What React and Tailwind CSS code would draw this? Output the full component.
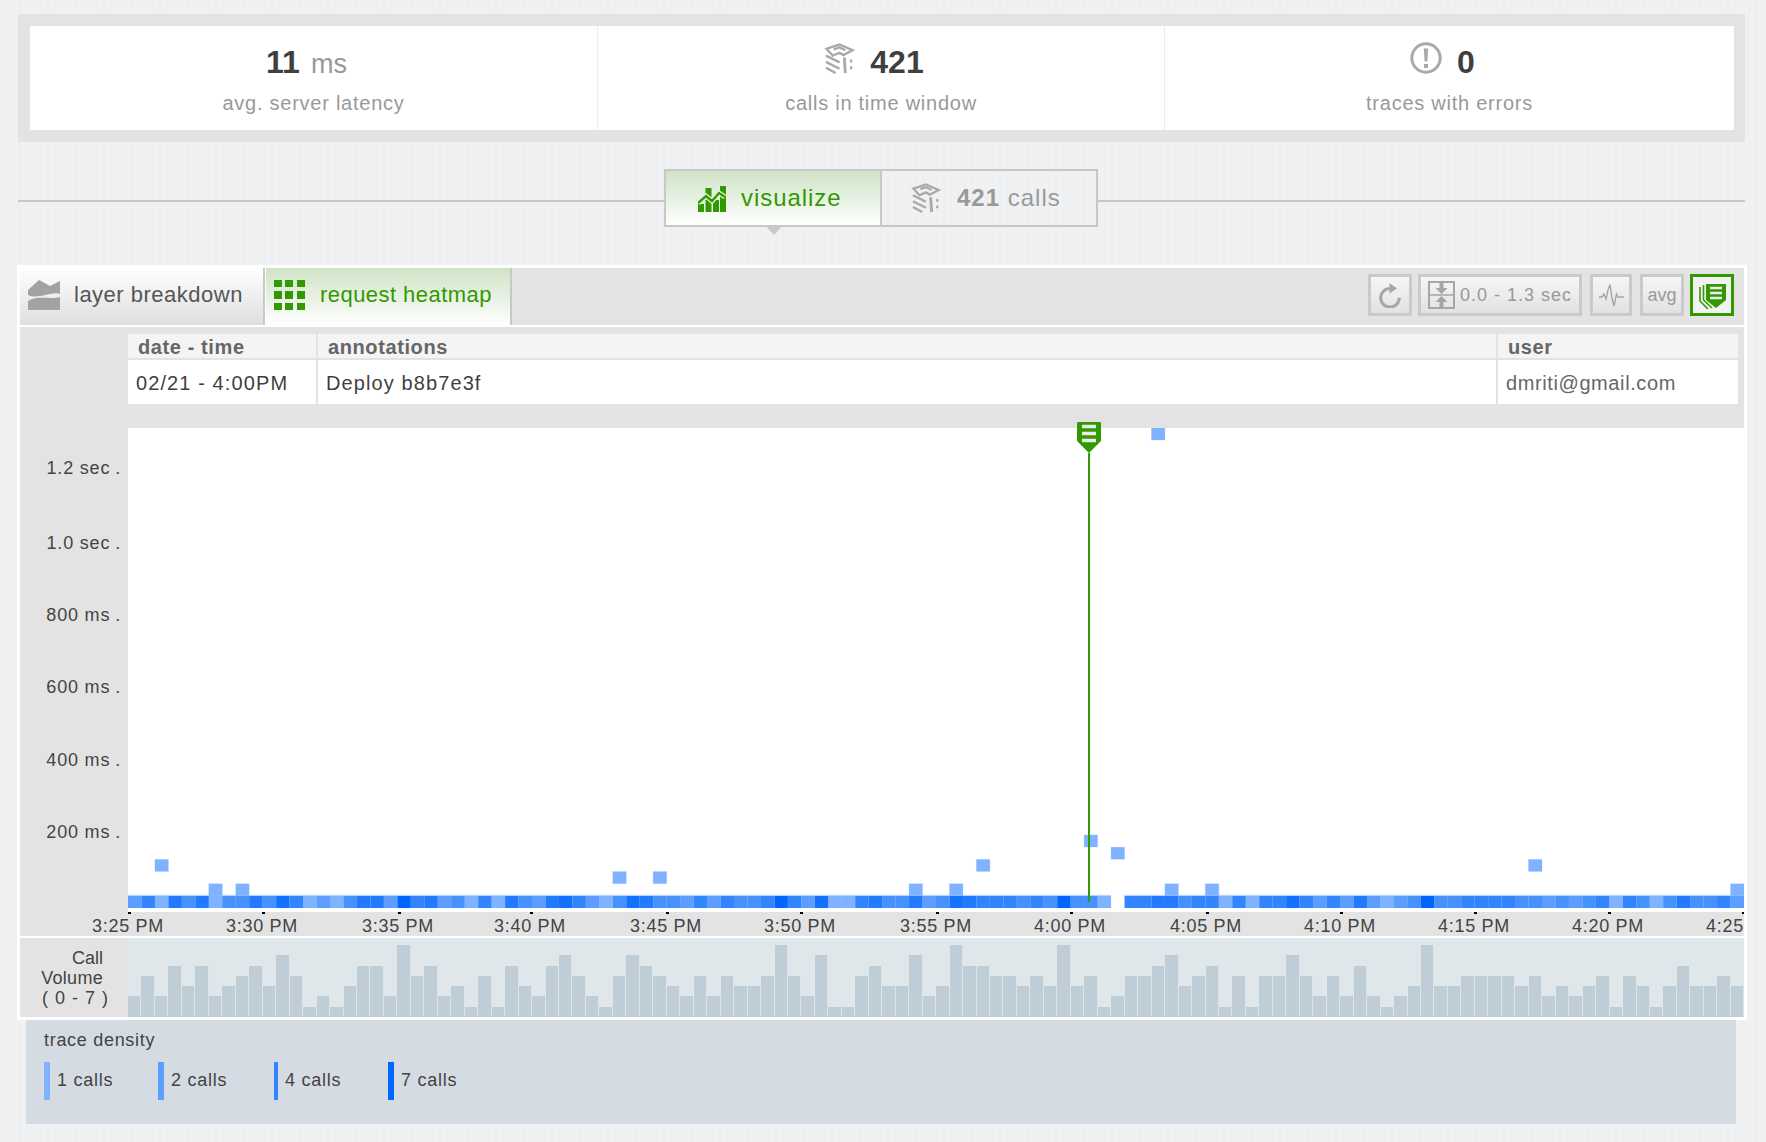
import React from 'react';

// calls per bucket, read off the volume strip
const VOLUME = [
  2, 4, 2, 5, 3, 5, 2, 3, 4, 5, 3, 6, 4, 1, 2, 1, 3, 5, 5, 2, 7, 4, 5, 2, 3, 1, 4, 1, 5, 3, 2, 5, 6, 4, 2,
  1, 4, 6, 5, 4, 3, 2, 4, 2, 4, 3, 3, 4, 7, 4, 2, 6, 1, 1, 4, 5, 3, 3, 6, 2, 3, 7, 5, 5, 4, 4, 3, 4, 3, 7,
  3, 4, 1, 2, 4, 4, 5, 6, 3, 4, 5, 1, 4, 1, 4, 4, 6, 4, 2, 4, 2, 5, 2, 1, 2, 3, 7, 3, 3, 4, 4, 4, 4, 3, 4,
  2, 3, 2, 3, 4, 1, 4, 3, 1, 3, 5, 3, 3, 4, 3,
];

// stray cells above the base row: [bucket, row]
const STRAYS = [
  [2, 3], [6, 1], [8, 1], [36, 2], [39, 2], [58, 1], [61, 1], [63, 3], [71, 5], [73, 4], [77, 1], [80, 1], [104, 3], [119, 1],
];

const DENSITY = { 1: 0.5, 2: 0.64, 3: 0.72, 4: 0.8, 5: 0.87, 6: 0.93, 7: 1 };
const CELL = 1616 / 120;

const Y_LABELS = [
  ['1.2 sec', 40],
  ['1.0 sec', 115],
  ['800 ms', 187],
  ['600 ms', 259],
  ['400 ms', 332],
  ['200 ms', 404],
];

const X_LABELS = [
  ['3:25 PM', 1], ['3:30 PM', 135], ['3:35 PM', 271], ['3:40 PM', 403], ['3:45 PM', 539], ['3:50 PM', 673],
  ['3:55 PM', 809], ['4:00 PM', 943], ['4:05 PM', 1079], ['4:10 PM', 1213], ['4:15 PM', 1347], ['4:20 PM', 1481], ['4:25 PM', 1615],
];

const LEGEND = [
  ['1 calls', 'bg-[#80b3ff]', 'w-[6px]', 'w-[114px]'],
  ['2 calls', 'bg-[#5c9eff]', 'w-[6px]', 'w-[116px]'],
  ['4 calls', 'bg-[#3385ff]', 'w-[4px]', 'w-[114px]'],
  ['7 calls', 'bg-[#0066ff]', 'w-[6px]', 'w-[114px]'],
];

const StackIcon = ({ className }) => (
  <svg viewBox="0 0 30 32" className={className} fill="none" stroke="#a9a9a9" strokeWidth="2.4">
    <path d="M1.5 6 L15 1.5 L28.5 7.5 L19 12.5 L15 10 L8 13 Z M9 6.5 L15 4.5 L21 7.5" />
    <path d="M1 13 L15 20 M1 19.5 L15 26.5 M1 25.5 L11 31" />
    <path d="M20 15 L21 31" strokeWidth="3" />
    <path d="M27 17 v3 M27 24 v3" />
  </svg>
);

const AlertIcon = () => (
  <svg viewBox="0 0 32 32" className="w-[32px] h-[32px]" fill="none">
    <circle cx="16" cy="16" r="14.2" stroke="#a9a9a9" strokeWidth="3" />
    <path d="M13.8 6.5 h4.4 l-0.8 13 h-2.8 Z M14 22 h4 v4 h-4 Z" fill="#a9a9a9" />
  </svg>
);

const VisualizeIcon = () => (
  <svg viewBox="0 0 28 27" className="w-[28px] h-[27px]" fill="#339900">
    <path d="M0 19 h6 v8 H0 Z M7.5 3 h6 v24 h-6 Z M15 15 h6 v12 h-6 Z M22 1 h6 v26 h-6 Z" />
    <path d="M0 18 L8 11 L14 16 L21 8 L27 12" fill="none" stroke="#e4efdf" strokeWidth="5" />
    <path d="M0 18 L8 11 L14 16 L21 8 L27 12" fill="none" stroke="#339900" strokeWidth="2.4" />
  </svg>
);

const LayersIcon = () => (
  <svg viewBox="0 0 32 30" className="w-[32px] h-[30px]" fill="#a2a2a2">
    <path d="M0 10 L11 0 L22 6 L32 1 V14 C24 11 10 20 0 15 Z" />
    <path d="M0 21 C10 15 22 20 32 17 V30 H0 Z" />
  </svg>
);

const GridIcon = () => (
  <svg viewBox="0 0 31 30" className="w-[31px] h-[30px]" fill="#339900">
    <path d="M0 0 h8 v7 H0 Z M11 0 h8 v7 h-8 Z M23 0 h8 v7 h-8 Z M0 11 h8 v8 H0 Z M11 11 h8 v8 h-8 Z M23 11 h8 v8 h-8 Z M0 23 h8 v7 H0 Z M11 23 h8 v7 h-8 Z M23 23 h8 v7 h-8 Z" />
  </svg>
);

const RefreshIcon = () => (
  <svg viewBox="0 0 22 25" className="w-[22px] h-[25px]" fill="none">
    <path d="M11 5.5 A9.3 9.3 0 1 0 20.3 14.8" stroke="#a6a6a6" strokeWidth="3" />
    <path d="M10.5 0 L18 5.5 L10.5 10.5 Z" fill="#a6a6a6" />
  </svg>
);

const RangeIcon = () => (
  <svg viewBox="0 0 27 28" className="w-[27px] h-[28px]" fill="#a6a6a6">
    <path d="M1 1 h25 v26 h-25 Z" fill="none" stroke="#a6a6a6" strokeWidth="2" />
    <path d="M1 14 h25" stroke="#a6a6a6" strokeWidth="1.5" />
    <path d="M11.5 2 h4 v5 h4 L13.5 13 L7.5 7 h4 Z M7.5 21 L13.5 15 L19.5 21 h-4 v5 h-4 v-5 Z" />
  </svg>
);

const WaveIcon = () => (
  <svg viewBox="0 0 25 23" className="w-[25px] h-[23px]" fill="none" stroke="#a6a6a6" strokeWidth="1.4">
    <path d="M0 13 H3 L5 10 L7 15 L9 6 L11 0.5 L13 14 L15 22 L17.5 10 L19 13 H25" />
  </svg>
);

const NotesIcon = () => (
  <svg viewBox="0 0 27 27" className="w-[27px] h-[27px]" fill="none">
    <path d="M7 2 h20 v16 l-10 8 l-10 -8 Z" fill="#339900" />
    <path d="M11 6 h12 M11 11 h12 M11 16 h12" stroke="#ececec" strokeWidth="2.6" />
    <path d="M4.5 3 V18 L13 26 M1 5 V19 L9 27" stroke="#339900" strokeWidth="1.6" />
  </svg>
);

const Stat = ({ icon, value, unit, label, className }) => (
  <div className={`flex flex-col items-center pt-[16px] border-r border-[#ececec] last:border-r-0 ${className}`}>
    <div className="h-[40px] flex items-center gap-[15px] pr-[14px]">
      {icon && <div className="-mt-[8px]">{icon}</div>}
      <span className="text-[32px] font-bold text-[#3f3f3f] leading-none">
        {value}
        {unit && <span className="ml-[11px] text-[27px] font-normal text-[#999]">{unit}</span>}
      </span>
    </div>
    <div className="mt-[9px] text-[20px] leading-[24px] tracking-[0.75px] text-[#999]">{label}</div>
  </div>
);

const ToolButton = ({ className, children }) => (
  <div className={`h-[42px] flex items-center justify-center border-[3px] border-[#cacaca] bg-gradient-to-b from-[#f6f6f6] to-[#e2e2e2] ${className}`}>
    {children}
  </div>
);

const Heatmap = () => (
  <svg width="1616" height="484" className="absolute top-0 left-0">
    {VOLUME.map((v, i) => {
      const strays = STRAYS.filter(s => s[0] === i).length;
      const base = i === 73 ? 0 : v - strays;
      if (!base) return null;
      return (
        <g key={i}>
          <rect x={i * CELL} y={466.8} width={CELL} height={1.2} fill="#b9d4ff" />
          <rect x={i * CELL} y={468} width={CELL} height={12} fill="#0066ff" fillOpacity={DENSITY[base]} />
        </g>
      );
    })}
    {STRAYS.map(([b, r]) => (
      <rect key={b} x={b * CELL} y={468 - 12.2 * r} width={CELL} height={12} fill="#80b3ff" stroke="#80b3ff" strokeOpacity="0.25" />
    ))}
    <rect x={76 * CELL} y={0} width={CELL} height={12} fill="#80b3ff" stroke="#80b3ff" strokeOpacity="0.25" />
  </svg>
);

const Marker = () => (
  <div className="absolute left-[949px] top-[-6px] w-[24px] flex flex-col items-center">
    <svg viewBox="0 0 24 31" className="w-[24px] h-[31px]">
      <path d="M1 0 H23 L24 1 V19 L12 31 L0 19 V1 Z" fill="#339900" />
      <path d="M5 4.5 H19 M5 11.5 H19 M5 18.5 H19" stroke="#eaeaea" strokeWidth="3.4" />
    </svg>
    <div className="w-[2px] h-[449px] bg-[#339900]" />
  </div>
);

export default function App() {
  return (
    <div className="w-[1766px] h-[1142px] overflow-hidden bg-[repeating-linear-gradient(90deg,#eff1f2_0px,#eff1f2_5px,#edeff0_5px,#edeff0_7px)] font-['Liberation_Sans',sans-serif] text-[#444]">
      <div className="pt-[14px] pl-[18px]">
        <div className="w-[1727px] h-[128px] bg-[#e3e3e3] pt-[12px] pl-[12px]">
          <div className="w-[1704px] h-[104px] bg-white flex">
            <Stat className="w-[568px]" value="11" unit="ms" label="avg. server latency" />
            <Stat className="w-[567px]" icon={<StackIcon className="w-[31px] h-[31px]" />} value="421" label="calls in time window" />
            <Stat className="flex-1" icon={<AlertIcon />} value="0" label="traces with errors" />
          </div>
        </div>
      </div>

      <div className="mt-[27px] ml-[18px] w-[1727px] flex items-center">
        <div className="w-[646px] h-[2px] mt-[5px] bg-[#c8c8c8]" />
        <div className="flex relative">
          <div className="w-[218px] h-[58px] border-2 border-[#c8c8c8] bg-gradient-to-b from-[#cfe3c6] to-white flex items-center pl-[32px] gap-[15px]">
            <VisualizeIcon />
            <span className="text-[24px] tracking-[0.95px] text-[#339900]">visualize</span>
          </div>
          <div className="w-[216px] h-[58px] border-2 border-l-0 border-[#c8c8c8] flex items-center pl-[28px] gap-[15px]">
            <StackIcon className="w-[32px] h-[30px]" />
            <span className="text-[24px] tracking-[1px] text-[#999]"><b>421</b> calls</span>
          </div>
          <div className="absolute left-[101px] top-[56px] w-0 h-0 border-x-[9px] border-x-transparent border-t-[10px] border-t-[#c8c8c8]" />
        </div>
        <div className="flex-1 h-[2px] mt-[5px] bg-[#c8c8c8]" />
      </div>

      <div className="mt-[38px] ml-[17px] w-[1730px] border-[3px] border-white bg-[#e3e3e3]">
        <div className="h-[57px] flex items-stretch">
          <div className="w-[243px] flex items-center pl-[8px] gap-[14px] pb-[4px] bg-gradient-to-b from-white to-[#dedede]">
            <LayersIcon />
            <span className="text-[22px] tracking-[0.5px] text-[#555]">layer breakdown</span>
          </div>
          <div className="w-[2px] bg-[#c8c8c8]" />
          <div className="w-[1px] bg-white" />
          <div className="w-[244px] flex items-center pl-[8px] gap-[15px] pb-[4px] bg-gradient-to-b from-[#cfe3c6] to-white">
            <GridIcon />
            <span className="text-[22px] tracking-[0.45px] text-[#339900]">request heatmap</span>
          </div>
          <div className="w-[2px] bg-[#c8c8c8]" />
          <div className="flex-1 flex items-center justify-end gap-[6px] pr-[10px] pb-[3px]">
            <ToolButton className="w-[44px]"><RefreshIcon /></ToolButton>
            <ToolButton className="w-[164px] gap-[5px] mr-[2px]">
              <RangeIcon />
              <span className="text-[18px] tracking-[1px] text-[#999]">0.0 - 1.3 sec</span>
            </ToolButton>
            <ToolButton className="w-[42px] mr-[2px]"><WaveIcon /></ToolButton>
            <ToolButton className="w-[44px]"><span className="text-[18px] text-[#999]">avg</span></ToolButton>
            <div className="w-[44px] h-[42px] flex items-center justify-center border-[3px] border-[#339900] bg-[#f2f2f2]">
              <NotesIcon />
            </div>
          </div>
        </div>

        <div className="border-t-2 border-white pt-[7px]">
          <div className="ml-[108px] w-[1610px] h-[70px] grid grid-cols-[190px_1fr_240px] grid-rows-[24px_2px_44px] bg-[#e3e3e3] text-[20px]">
            <div className="bg-[#f4f4f4] pl-[10px] pt-[1px] leading-[24px] tracking-[0.6px] font-bold text-[#666] mr-[2px]">date - time</div>
            <div className="bg-[#f4f4f4] pl-[10px] pt-[1px] leading-[24px] tracking-[0.6px] font-bold text-[#666] mr-[2px]">annotations</div>
            <div className="bg-[#f4f4f4] pl-[10px] pt-[1px] leading-[24px] tracking-[0.6px] font-bold text-[#666]">user</div>
            <div className="col-span-3" />
            <div className="bg-white pl-[8px] pt-[1px] leading-[44px] tracking-[1.1px] text-[#3f3f3f] mr-[2px]">02/21 - 4:00PM</div>
            <div className="bg-white pl-[8px] pt-[1px] leading-[44px] tracking-[1.1px] text-[#3f3f3f] mr-[2px]">Deploy b8b7e3f</div>
            <div className="bg-white pl-[8px] pt-[1px] leading-[44px] tracking-[0.6px] text-[#666]">dmriti@gmail.com</div>
          </div>

          <div className="mt-[24px] flex">
            <div className="w-[108px] relative text-[18px] tracking-[0.8px] text-[#444]">
              {Y_LABELS.map(([label, top]) => (
                <div key={label} className="absolute right-[7px] leading-[20px] whitespace-nowrap" style={{ top: top - 10 }}>
                  {label}
                  <span className="ml-[5px]">.</span>
                </div>
              ))}
            </div>
            <div className="w-[1616px] h-[484px] bg-white relative">
              <Heatmap />
              <Marker />
            </div>
          </div>

          <div className="relative h-[24px] overflow-hidden">
            {X_LABELS.map(([label, left]) => (
              <React.Fragment key={label}>
                <div className="absolute top-0 w-[3px] h-[2px] bg-black" style={{ left: left + 108 - 1 }} />
                <div className="absolute top-[3px] w-[90px] text-center text-[18px] leading-[22px] tracking-[0.7px] text-[#444] whitespace-nowrap" style={{ left: left + 108 - 46 }}>
                  {label}
                </div>
              </React.Fragment>
            ))}
          </div>
        </div>

        <div className="border-t-2 border-white flex h-[81px]">
          <div className="w-[108px] pt-[10px] pr-[19px] text-[18px] leading-[20px] text-right text-[#444]">
            <div className="pr-[6px]">Call</div>
            <div className="pr-[6px] tracking-[0.3px]">Volume</div>
            <div className="whitespace-nowrap tracking-[1px]">( 0 - 7 )</div>
          </div>
          <div className="w-[1616px] h-[79px] bg-[#e0e7eb] flex items-end">
            {VOLUME.map((v, i) => (
              <div key={i} className="flex-1 bg-[#bfcdd7] border-r border-[#dde4e9]" style={{ height: v * 10.3 }} />
            ))}
          </div>
        </div>
      </div>

      <div className="ml-[26px] w-[1710px] h-[104px] bg-[#d5dbe3] pl-[18px] pt-[8px] text-[#444]">
        <div className="text-[18px] leading-[24px] tracking-[0.7px]">trace density</div>
        <div className="mt-[10px] flex">
          {LEGEND.map(([label, color, barWidth, width]) => (
            <div key={label} className={`flex items-center h-[38px] gap-[7px] ${width}`}>
              <div className={`h-[38px] ${barWidth} ${color}`} />
              <span className="text-[18px] tracking-[0.75px] -mt-[2px]">{label}</span>
            </div>
          ))}
        </div>
      </div>
    </div>
  );
}
